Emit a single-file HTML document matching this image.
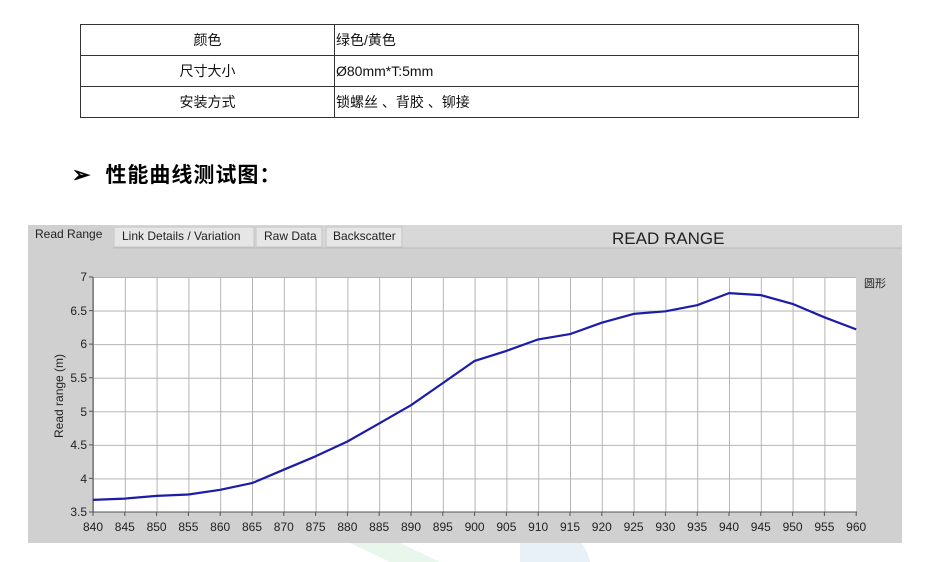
<!DOCTYPE html>
<html><head><meta charset="utf-8"><style>
body{margin:0;width:930px;height:562px;background:#fff;position:relative;overflow:hidden;font-family:"Liberation Sans","Noto Sans CJK SC",sans-serif}
table{position:absolute;left:80px;top:24px;border-collapse:collapse;width:779px;font-size:14px;color:#111}
td{border:1px solid #333;height:30px;padding:0}
td.a{width:253px;text-align:center}
td.b{padding-left:1px}
.h{position:absolute;left:72px;top:159px;font-size:21px;font-weight:bold;color:#000;letter-spacing:1px}
</style></head><body>
<table>
<tr><td class="a">颜色</td><td class="b">绿色/黄色</td></tr>
<tr><td class="a">尺寸大小</td><td class="b">Ø80mm*T:5mm</td></tr>
<tr><td class="a">安装方式</td><td class="b">锁螺丝 、背胶 、铆接</td></tr>
</table>
<div class="h"><span style="font-size:22px;margin-right:14px">➢</span>性能曲线测试图：</div>
<svg style="position:absolute;left:0;top:0" width="930" height="562" font-family="Liberation Sans, Noto Sans CJK SC, sans-serif">
<defs><pattern id="g" patternUnits="userSpaceOnUse" x="93" y="277" width="31.8" height="33.57"><path d="M0.5 0V34M0 0.5H32" stroke="#b4b4b4" stroke-width="1" fill="none"/></pattern></defs>
<path d="M350 543 L390 562 L440 562 L400 543Z" fill="#e8f6ec"/>
<path d="M520 543 a40 40 0 0 1 70 19 L520 562Z" fill="#e8f0f8"/>
<rect x="28" y="225" width="874" height="318" fill="#d0d0d0"/>
<rect x="28" y="225" width="874" height="23" fill="#d8d8d8"/>
<line x1="28" y1="248" x2="902" y2="248" stroke="#bdbdbd"/>
<rect x="28" y="225" width="85" height="24" fill="#d0d0d0"/>
<rect x="114" y="227" width="140" height="20" fill="#e6e6e6" stroke="#c4c4c4"/>
<rect x="256" y="227" width="66" height="20" fill="#e6e6e6" stroke="#c4c4c4"/>
<rect x="326" y="227" width="76" height="20" fill="#e6e6e6" stroke="#c4c4c4"/>
<g font-size="12" fill="#222">
<text x="35" y="238">Read Range</text>
<text x="122" y="240">Link Details / Variation</text>
<text x="264" y="240">Raw Data</text>
<text x="333" y="240">Backscatter</text>
</g>
<text x="612" y="244" font-size="17" fill="#222">READ RANGE</text>
<rect x="93" y="277" width="763" height="235" fill="#fff"/>
<rect x="93" y="277" width="763" height="235" fill="url(#g)"/>
<line x1="93" y1="512" x2="857" y2="512" stroke="#555"/>
<line x1="93" y1="277" x2="93" y2="512" stroke="#555"/>
<path d="M89 277H93M89 310.6H93M89 344.1H93M89 377.7H93M89 411.3H93M89 444.9H93M89 478.4H93M89 512H93" stroke="#555"/>
<path d="M93 512V516M124.8 512V516M156.6 512V516M188.4 512V516M220.2 512V516M252 512V516M283.8 512V516M315.6 512V516M347.4 512V516M379.2 512V516M411 512V516M442.8 512V516M474.6 512V516M506.4 512V516M538.2 512V516M570 512V516M601.8 512V516M633.6 512V516M665.4 512V516M697.2 512V516M729 512V516M760.8 512V516M792.6 512V516M824.4 512V516M856.2 512V516" stroke="#555"/>
<g font-size="12" fill="#222" text-anchor="end">
<text x="87" y="281">7</text><text x="87" y="315">6.5</text><text x="87" y="348">6</text><text x="87" y="382">5.5</text><text x="87" y="416">5</text><text x="87" y="449">4.5</text><text x="87" y="483">4</text><text x="87" y="516">3.5</text>
</g>
<g font-size="12" fill="#222" text-anchor="middle">
<text x="93" y="531">840</text><text x="124.8" y="531">845</text><text x="156.6" y="531">850</text><text x="188.4" y="531">855</text><text x="220.2" y="531">860</text><text x="252" y="531">865</text><text x="283.8" y="531">870</text><text x="315.6" y="531">875</text><text x="347.4" y="531">880</text><text x="379.2" y="531">885</text><text x="411" y="531">890</text><text x="442.8" y="531">895</text><text x="474.6" y="531">900</text><text x="506.4" y="531">905</text><text x="538.2" y="531">910</text><text x="570" y="531">915</text><text x="601.8" y="531">920</text><text x="633.6" y="531">925</text><text x="665.4" y="531">930</text><text x="697.2" y="531">935</text><text x="729" y="531">940</text><text x="760.8" y="531">945</text><text x="792.6" y="531">950</text><text x="824.4" y="531">955</text><text x="856.2" y="531">960</text>
</g>
<text transform="translate(63,438) rotate(-90)" font-size="12" fill="#222">Read range (m)</text>
<text x="864" y="287" font-size="11" fill="#222">圆形</text>
<polyline fill="none" stroke="#1c1ca8" stroke-width="2.2" stroke-linejoin="round" points="93,499.9 124.8,498.6 156.6,495.9 188.4,494.5 220.2,489.8 252,483.1 283.8,469.7 315.6,456.3 347.4,441.5 379.2,423.4 411,405.2 442.8,383.1 474.6,360.9 506.4,350.9 538.2,339.4 570,334.1 601.8,322.7 633.6,313.9 665.4,311.3 697.2,305.2 729,293.1 760.8,295.1 792.6,303.9 824.4,317.3 856.2,329.4"/>
</svg>
</body></html>
